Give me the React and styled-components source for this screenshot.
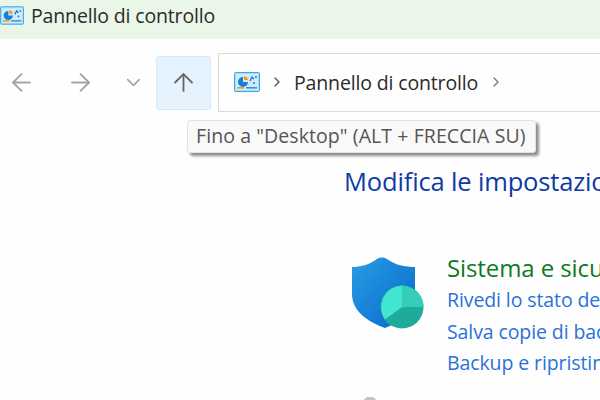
import styled, { createGlobalStyle } from "styled-components";
import { ArrowLeft, ArrowRight, ArrowUp, ChevronDown, ChevronRight } from "lucide-react";

const GlobalStyle = createGlobalStyle`
  html, body {
    margin: 0;
    padding: 0;
    background: #fff;
  }
`;

const Window = styled.div`
  position: relative;
  width: 600px;
  height: 400px;
  overflow: hidden;
  background: #fefefe;
  font-family: "Open Sans", "Noto Sans", sans-serif;
  color: #2b2b2b;
`;

const TitleBar = styled.div`
  display: flex;
  align-items: center;
  gap: 7px;
  height: 39px;
  background: #e9f6e8;
  font-size: 19.5px;
  letter-spacing: -0.15px;
  padding-bottom: 9px;
  box-sizing: border-box;
`;

const NavRow = styled.div`
  display: flex;
  align-items: center;
  height: 59px;
  margin-top: 14px;
`;

const NavButton = styled.div`
  display: flex;
  align-items: center;
  justify-content: center;
  width: ${(props) => props.$width}px;
  height: 54px;
  color: ${(props) => props.$color || "#a3a3a3"};
`;

const UpButton = styled(NavButton)`
  box-sizing: border-box;
  margin-left: 8px;
  margin-right: 7px;
  background: #e5f3ff;
  border: 1px solid #d4eafc;
  border-radius: 3px;
`;

const AddressBar = styled.div`
  flex: 1;
  display: flex;
  align-items: center;
  height: 59px;
  box-sizing: border-box;
  padding-left: 14px;
  border: 1px solid #d9d9d9;
  border-right: none;
  font-size: 19.5px;
  letter-spacing: -0.15px;
  padding-bottom: 1px;
`;

const Crumb = styled.span`
  margin: 0 ${(props) => props.$after}px 0 ${(props) => props.$before}px;
  display: flex;
  color: ${(props) => props.$color};
`;

const Tooltip = styled.div`
  position: absolute;
  left: 187px;
  top: 120px;
  height: 33px;
  box-sizing: border-box;
  padding: 0 9px 2px 8px;
  display: flex;
  align-items: center;
  white-space: nowrap;
  background: #f9f9f9;
  border: 1px solid #e2e2e2;
  border-radius: 3px;
  box-shadow: 3px 3px 3px #8d8d8d;
  font-size: 19.5px;
  letter-spacing: 0.08px;
  color: #555;
`;

const Content = styled.div`
  margin-top: 53px;
  padding-left: 344px;
  white-space: nowrap;
`;

const Heading = styled.div`
  font-size: 25.5px;
  line-height: 32px;
  letter-spacing: -0.15px;
  color: #0f3aa5;
`;

const Category = styled.div`
  display: flex;
  margin-top: 55px;
  margin-left: 8px;
  gap: 23px;
`;

const IconSlot = styled.div`
  flex: none;
  width: 72px;
  height: 72px;
  margin-top: 5px;
`;

const CategoryText = styled.div`
  display: flex;
  flex-direction: column;
`;

const CategoryTitle = styled.div`
  font-size: 24px;
  line-height: 32px;
  letter-spacing: -0.1px;
  color: #0d7a1e;
`;

const TaskLink = styled.div`
  font-size: 19.5px;
  line-height: 31.5px;
  letter-spacing: -0.1px;
  color: #2a72d8;
`;

const NextIcon = styled.svg`
  position: absolute;
  left: 360px;
  top: 397px;
`;

function PanelIcon({ width, height }) {
  return (
    <svg width={width} height={height} viewBox="0 0 26 20">
      <rect x="0.5" y="0.5" width="25" height="19" rx="1" fill="#a9dcf7" stroke="#3ea5e6" />
      <rect x="2" y="2" width="22" height="16" fill="#cfeafa" />
      <path d="M4 10a5 5 0 0 1 5-5v5h5a5 5 0 0 1-10 0z" fill="#1b7fd1" />
      <path d="M10 4a5 5 0 0 1 4 4h-4z" fill="#ef9a1e" />
      <path d="M16 9l2-4 2 2" fill="none" stroke="#1b6fc4" strokeWidth="1.3" />
      <circle cx="22" cy="5" r="1" fill="#1b7fd1" />
      <circle cx="20" cy="11" r="1" fill="#1b7fd1" />
      <rect x="3" y="15" width="7" height="1.6" fill="#ef9a1e" />
      <rect x="12" y="15" width="11" height="1.6" fill="#3a93d9" />
    </svg>
  );
}

function ShieldIcon() {
  return (
    <svg width="72" height="72" viewBox="0 0 72 72">
      <defs>
        <linearGradient id="shield" x1="0" y1="0" x2="1" y2="1">
          <stop offset="0" stopColor="#2a9ce2" />
          <stop offset="1" stopColor="#0668cc" />
        </linearGradient>
      </defs>
      <path
        d="M0 10c8 0 17-2 25-8 3-2 7-2 10 0 8 6 18 8 28 8v27c0 17-14 28-30 34C16 65 0 54 0 37z"
        fill="url(#shield)"
      />
      <circle cx="50" cy="50" r="21.500" fill="#1fab98" />
      <path d="M50 50V28.500a21.500 21.500 0 0 1 21.500 21.500z" fill="#36cdb5" />
      <path d="M50 50V28.500a21.500 21.500 0 0 0-17 34z" fill="#41e5d0" />
    </svg>
  );
}

export default function App() {
  return (
    <Window>
      <GlobalStyle />
      <TitleBar>
        <PanelIcon width={24} height={19} />
        Pannello di controllo
      </TitleBar>
      <NavRow>
        <NavButton $width={43}>
          <ArrowLeft size={29} strokeWidth={1.5} />
        </NavButton>
        <NavButton $width={75}>
          <ArrowRight size={29} strokeWidth={1.5} />
        </NavButton>
        <NavButton $width={30}>
          <ChevronDown size={23} strokeWidth={1.6} />
        </NavButton>
        <UpButton $width={55} $color="#666">
          <ArrowUp size={29} strokeWidth={1.5} />
        </UpButton>
        <AddressBar>
          <PanelIcon width={28} height={20} />
          <Crumb $color="#555" $before={8} $after={9}>
            <ChevronRight size={16} strokeWidth={2} />
          </Crumb>
          Pannello di controllo
          <Crumb $color="#777" $before={10} $after={0}>
            <ChevronRight size={16} strokeWidth={2} />
          </Crumb>
        </AddressBar>
      </NavRow>
      <Tooltip>Fino a "Desktop" (ALT + FRECCIA SU)</Tooltip>
      <Content>
        <Heading>Modifica le impostazioni del computer</Heading>
        <Category>
          <IconSlot>
            <ShieldIcon />
          </IconSlot>
          <CategoryText>
            <CategoryTitle>Sistema e sicurezza</CategoryTitle>
            <TaskLink>Rivedi lo stato del computer</TaskLink>
            <TaskLink>Salva copie di backup dei file</TaskLink>
            <TaskLink>Backup e ripristino (Windows 7)</TaskLink>
          </CategoryText>
        </Category>
      </Content>
      <NextIcon width="20" height="3" viewBox="0 0 20 3">
        <path d="M4 3a7 7 0 0 1 12 0z" fill="#b9c4cc" />
      </NextIcon>
    </Window>
  );
}
